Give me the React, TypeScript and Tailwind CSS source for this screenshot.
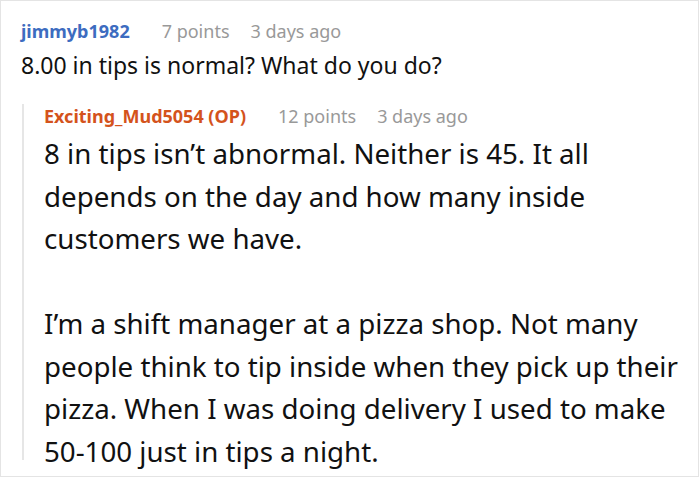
import React from "react";

export default function App() {
  return (
    <div
      className="w-[700px] h-[478px] bg-white overflow-hidden"
      style={{ fontFamily: '"Noto Sans", sans-serif' }}
    >
      <div className="w-[699px] h-[477px] border border-[#e4e4e4] pl-[20px] pt-[18px] overflow-hidden">
        <div className="flex items-baseline text-[18px] leading-[24px] whitespace-nowrap">
          <span className="font-bold text-[#3d6cc0]">jimmyb1982</span>
          <span className="ml-[32px] text-[#999999]">7 points</span>
          <span className="ml-[21px] text-[#999999]">3 days ago</span>
        </div>
        <div className="mt-[6px] text-[23px] leading-[32px] text-[#111111] whitespace-nowrap">
          8.00 in tips is normal? What do you do?
        </div>
        <div className="mt-[23px] ml-[1px] border-l-2 border-[#e6e6e6] pl-[20px] h-[356px]">
          <div className="flex items-baseline text-[18px] leading-[24px] whitespace-nowrap">
            <span className="font-bold text-[#d4531c]">Exciting_Mud5054 (OP)</span>
            <span className="ml-[32px] text-[#999999]">12 points</span>
            <span className="ml-[21px] text-[#999999]">3 days ago</span>
          </div>
          <div className="mt-[4px] text-[27.7px] leading-[42.5px] text-[#111111] w-[650px]">
            <p>
              8 in tips isn’t abnormal. Neither is 45. It all depends on the day
              and how many inside customers we have.
            </p>
            <p className="mt-[42.5px]">
              I’m a shift manager at a pizza shop. Not many people think to tip
              inside when they pick up their pizza. When I was doing delivery I
              used to make 50-100 just in tips a night.
            </p>
          </div>
        </div>
      </div>
    </div>
  );
}
